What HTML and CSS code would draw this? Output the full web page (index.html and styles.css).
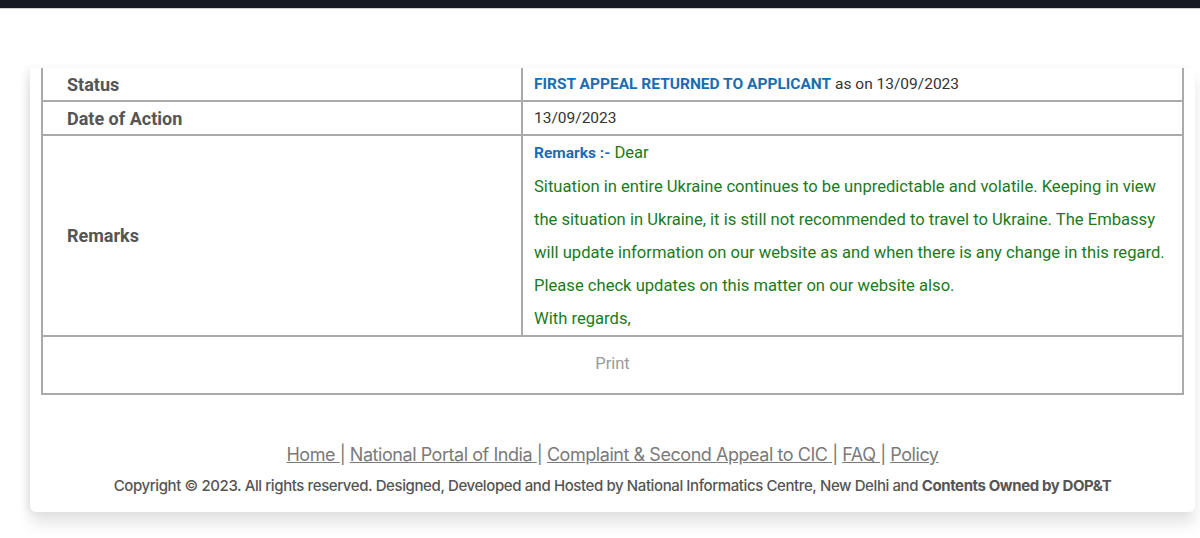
FILE: index.html
```html
<!DOCTYPE html>
<html lang="en">
<head>
<meta charset="utf-8">
<title>RTI Status</title>
<link rel="stylesheet" href="styles.css">
</head>
<body>
<div class="topbar"></div>
<main class="page">
  <section class="card">
    <table class="details">
      <tr class="row-status">
        <th>Status</th>
        <td><span class="status">FIRST APPEAL RETURNED TO APPLICANT</span> as on 13/09/2023</td>
      </tr>
      <tr class="row-date">
        <th>Date of Action</th>
        <td>13/09/2023</td>
      </tr>
      <tr class="row-remarks">
        <th>Remarks</th>
        <td class="remarks">
          <span class="remarks-label">Remarks :-</span> Dear<br>
          Situation in entire Ukraine continues to be unpredictable and volatile. Keeping in view<br>
          the situation in Ukraine, it is still not recommended to travel to Ukraine. The Embassy<br>
          will update information on our website as and when there is any change in this regard.<br>
          Please check updates on this matter on our website also.<br>
          With regards,
        </td>
      </tr>
      <tr class="row-print">
        <td colspan="2"><span class="print">Print</span></td>
      </tr>
    </table>
    <footer class="footer">
      <nav class="links">
        <a href="#">Home </a>| <a href="#">National Portal of India </a>| <a href="#">Complaint &amp; Second Appeal to CIC </a>| <a href="#">FAQ </a>| <a href="#">Policy</a>
      </nav>
      <p class="copy">Copyright © 2023. All rights reserved. Designed, Developed and Hosted by National Informatics Centre, New Delhi and <b>Contents Owned by DOP&amp;T</b></p>
    </footer>
  </section>
</main>
</body>
</html>
```

FILE: styles.css
```css
html, body {
  margin: 0;
  padding: 0;
  background: #ffffff;
}

body {
  font-family: Roboto, "Liberation Sans", Arial, sans-serif;
  color: #333;
  height: 538px;
  overflow: hidden;
}

.topbar {
  height: 8px;
  background: #161b23;
  border-bottom: 1px solid #cfd2d6;
}

.page {
  padding: 59px 5px 0 30px;
}

.card {
  background: #fff;
  border-radius: 0 0 6px 6px;
  padding: 0 11px;
  box-shadow: -4px 0 6px rgba(0, 0, 0, 0.06), 0 12px 14px rgba(0, 0, 0, 0.1);
  height: 444px;
}

.details {
  width: 100%;
  border-collapse: collapse;
  border-left: 2px solid #aaa;
  border-right: 2px solid #aaa;
}

.details th,
.details td {
  border-bottom: 2px solid #aaa;
  padding: 0;
  vertical-align: middle;
  text-align: left;
}

.details th {
  width: 454px;
  padding-left: 24px;
  border-right: 2px solid #aaa;
  font-size: 18px;
  font-weight: 700;
  color: #555;
}

.details td {
  padding-left: 11px;
  font-size: 15.5px;
  color: #333;
}

.row-status th,
.row-status td,
.row-date th,
.row-date td {
  height: 32px;
}

.status {
  color: #1b6db3;
  font-weight: 700;
}

.remarks {
  padding-top: 0;
  padding-bottom: 5px;
  line-height: 33px;
  white-space: nowrap;
  font-size: 16.6px !important;
  color: #1b7a1b !important;
}

.remarks-label {
  color: #1b6db3;
  font-weight: 700;
  font-size: 15.5px;
}

.row-remarks th,
.row-remarks td {
  height: 195px;
}

.row-print td {
  height: 56px;
  text-align: center;
  padding-left: 0;
}

.print {
  position: relative;
  top: -2px;
  color: #9a9a9a;
  font-size: 16.5px;
}

.footer {
  text-align: center;
  padding-top: 48px;
}

.links {
  font-family: Inter, "Liberation Sans", Arial, sans-serif;
  font-size: 18px;
  color: #7a7a7a;
  letter-spacing: -0.45px;
  line-height: 24px;
}

.links a {
  color: #7a7a7a;
  text-decoration: underline;
}

.copy {
  margin: 9px 0 0;
  font-family: Inter, "Liberation Sans", Arial, sans-serif;
  font-size: 15px;
  font-weight: 500;
  color: #555;
  letter-spacing: -0.4px;
  line-height: 20px;
}

.copy b {
  font-weight: 700;
}
```
